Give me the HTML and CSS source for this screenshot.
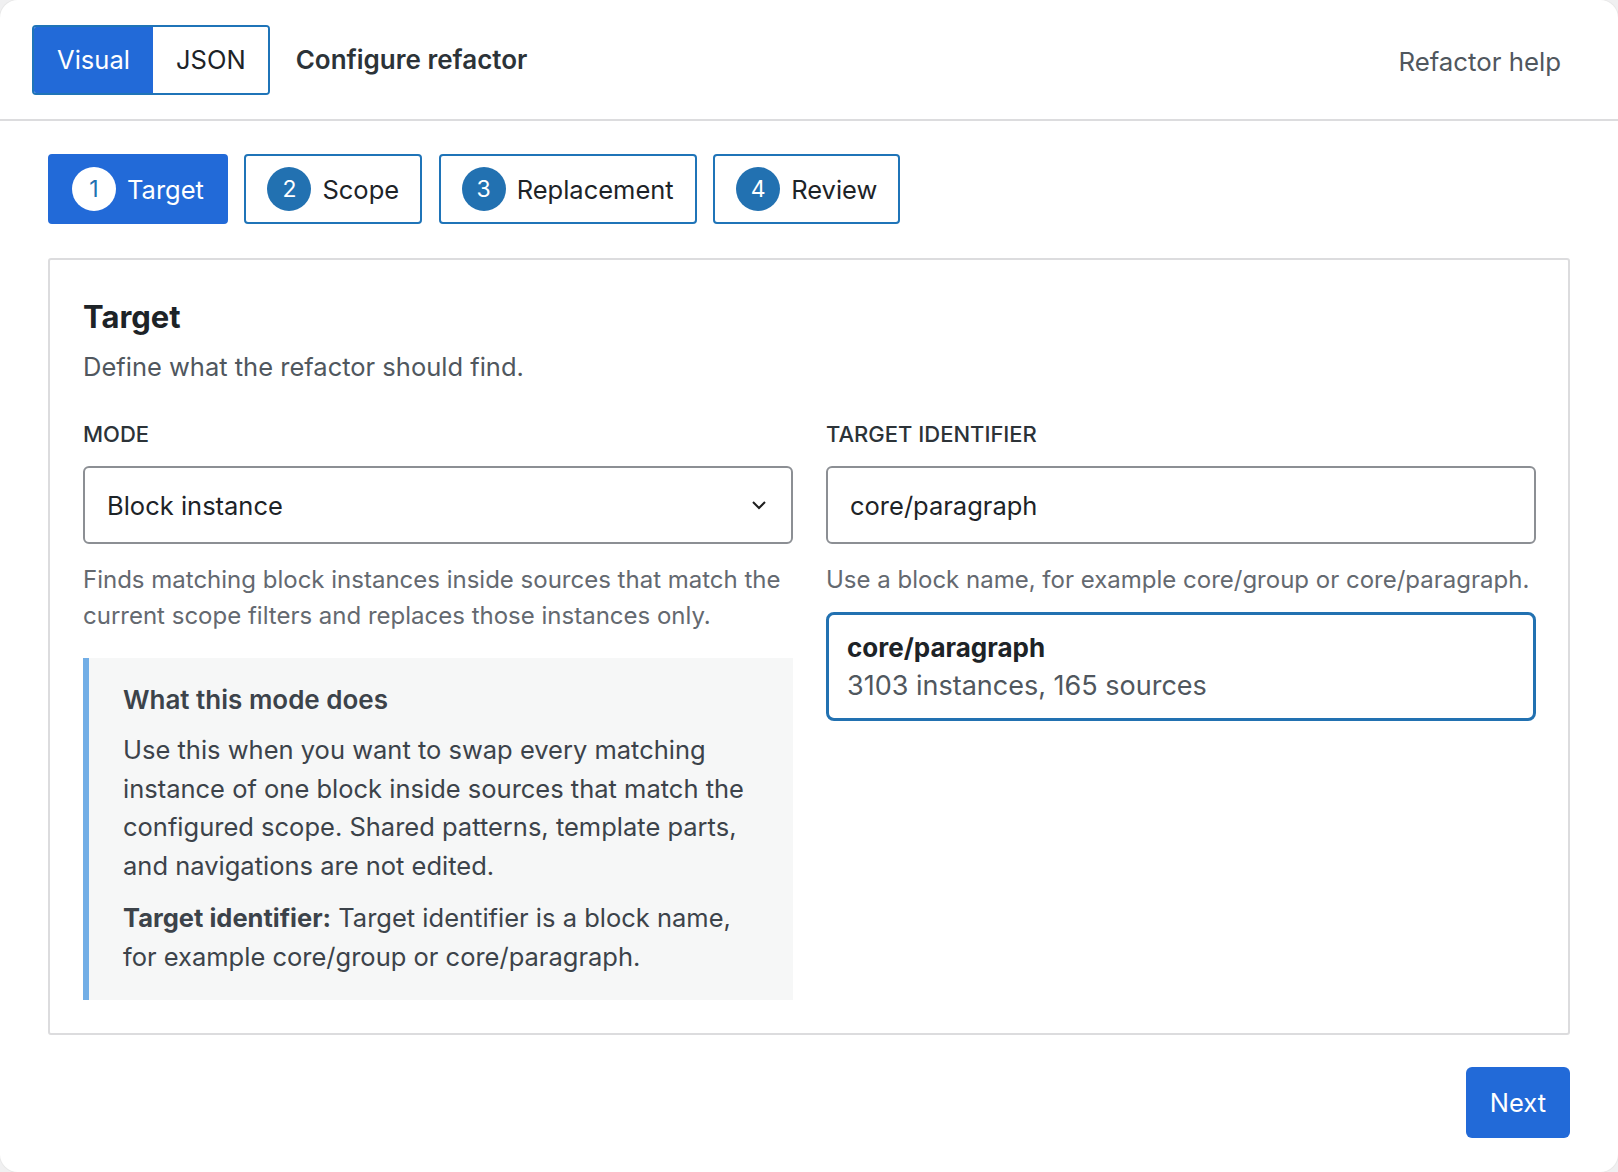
FILE: index.html
```html
<!DOCTYPE html>
<html lang="en">
<head>
  <meta charset="UTF-8">
  <title>Configure refactor</title>
  <link rel="stylesheet" href="styles.css">
</head>
<body>
  <div class="dialog">
    <header class="topbar">
      <div class="mode-toggle">
        <button class="seg active">Visual</button>
        <button class="seg">JSON</button>
      </div>
      <h1 class="title">Configure refactor</h1>
      <a class="help-link" href="#">Refactor help</a>
    </header>

    <main class="content">
      <nav class="steps">
        <button class="step current"><span class="num">1</span>Target</button>
        <button class="step"><span class="num">2</span>Scope</button>
        <button class="step"><span class="num">3</span>Replacement</button>
        <button class="step"><span class="num">4</span>Review</button>
      </nav>

      <section class="card">
        <h2>Target</h2>
        <p class="lead">Define what the refactor should find.</p>

        <div class="cols">
          <div class="col">
            <label class="field-label">MODE</label>
            <div class="select">
              <span>Block instance</span>
              <svg width="16" height="10" viewBox="0 0 16 10"><path d="M2 2l6 6 6-6" fill="none" stroke="#1e1e1e" stroke-width="2"/></svg>
            </div>
            <p class="hint">Finds matching block instances inside sources that match the current scope filters and replaces those instances only.</p>

            <div class="notice">
              <h3>What this mode does</h3>
              <p>Use this when you want to swap every matching instance of one block inside sources that match the configured scope. Shared patterns, template parts, and navigations are not edited.</p>
              <p><strong>Target identifier:</strong> Target identifier is a block name, for example core/group or core/paragraph.</p>
            </div>
          </div>

          <div class="col">
            <label class="field-label">TARGET IDENTIFIER</label>
            <div class="input">core/paragraph</div>
            <p class="hint">Use a block name, for example core/group or core/paragraph.</p>

            <div class="suggestion">
              <strong>core/paragraph</strong>
              <span>3103 instances, 165 sources</span>
            </div>
          </div>
        </div>
      </section>

      <div class="actions">
        <button class="next">Next</button>
      </div>
    </main>
  </div>
</body>
</html>
```

FILE: styles.css
```css
* {
  box-sizing: border-box;
}

body {
  margin: 0;
  font-family: Inter, 'Noto Sans', sans-serif;
  font-size: 25.5px;
  color: #1d2327;
  background: #f0f0f1;
}

button {
  font-family: inherit;
  font-size: 25.5px;
  cursor: pointer;
}

.dialog {
  width: 1618px;
  height: 1172px;
  background: white;
  border-radius: 18px;
  box-shadow: 0 0 0 1px #e8e8e8;
  overflow: hidden;
}

/* header */
.topbar {
  height: 121px;
  border-bottom: 2px solid #dcdcde;
  display: flex;
  align-items: center;
  padding: 0 57px 0 32px;
}

.mode-toggle {
  display: flex;
  height: 70px;
  border: 2px solid #1f74b8;
  border-radius: 4px;
  overflow: hidden;
}

.seg {
  border: none;
  background: white;
  color: #1d2327;
  padding: 0 22px 0 23px;
}

.seg.active {
  background: #226ad8;
  color: white;
  width: 119px;
  padding: 0;
}

.title {
  margin: 0 0 0 26px;
  font-size: 26px;
  font-weight: 600;
  color: #2c3338;
}

.help-link {
  margin-left: auto;
  margin-top: 4px;
  font-size: 25.8px;
  color: #50575e;
  text-decoration: none;
}

/* steps */
.content {
  padding: 33px 48px 0 48px;
}

.steps {
  display: flex;
  gap: 16.5px;
}

.step {
  height: 70px;
  display: flex;
  align-items: center;
  gap: 11px;
  padding: 0 21px;
  background: white;
  border: 2px solid #1f74b8;
  border-radius: 4px;
  color: #1d2327;
}

.step .num {
  width: 44px;
  height: 44px;
  border-radius: 50%;
  background: #2271b1;
  color: white;
  font-size: 23px;
  display: flex;
  align-items: center;
  justify-content: center;
}

.step.current {
  background: #226ad8;
  border-color: #226ad8;
  color: white;
  padding: 0 22px;
}

.step.current .num {
  background: white;
  color: #2271b1;
}

/* card */
.card {
  margin-top: 34px;
  border: 2px solid #dcdcde;
  border-radius: 3px;
  padding: 39px 32px 33px 33px;
}

.card h2 {
  margin: 0 0 14px;
  font-size: 31px;
  line-height: 36px;
  font-weight: 700;
}

.lead {
  margin: 0 0 34px;
  line-height: 36px;
  color: #50575e;
}

.cols {
  display: grid;
  grid-template-columns: 1fr 1fr;
  gap: 33px;
}

.field-label {
  display: block;
  font-size: 22px;
  line-height: 30px;
  font-weight: 500;
  color: #2c3338;
  margin-bottom: 17px;
}

.select, .input {
  height: 78px;
  border: 2px solid #8c8f94;
  border-radius: 6px;
  display: flex;
  align-items: center;
  padding: 0 24px 0 22px;
}

.select {
  justify-content: space-between;
}

.hint {
  margin: 18px 0 0;
  font-size: 24px;
  line-height: 36px;
  color: #646970;
}

.notice {
  margin-top: 24px;
  background: #f6f7f7;
  border-left: 6px solid #72aee6;
  padding: 24px 40px 24px 34px;
  color: #3c434a;
}

.notice h3 {
  margin: 0 0 13px;
  font-size: 26px;
  line-height: 36px;
  font-weight: 600;
}

.notice p {
  margin: 0;
  line-height: 38.5px;
}

.notice p + p {
  margin-top: 14px;
}

.suggestion {
  margin-top: 14px;
  border: 3px solid #2271b1;
  border-radius: 8px;
  padding: 14px 18px 13px;
  display: flex;
  flex-direction: column;
  line-height: 38px;
}

.suggestion strong {
  font-size: 26px;
}

.suggestion span {
  font-size: 27px;
  color: #50575e;
}

/* footer */
.actions {
  display: flex;
  justify-content: flex-end;
  margin-top: 32px;
}

.next {
  height: 71px;
  width: 104px;
  background: #226ad8;
  color: white;
  border: none;
  border-radius: 6px;
}
```
